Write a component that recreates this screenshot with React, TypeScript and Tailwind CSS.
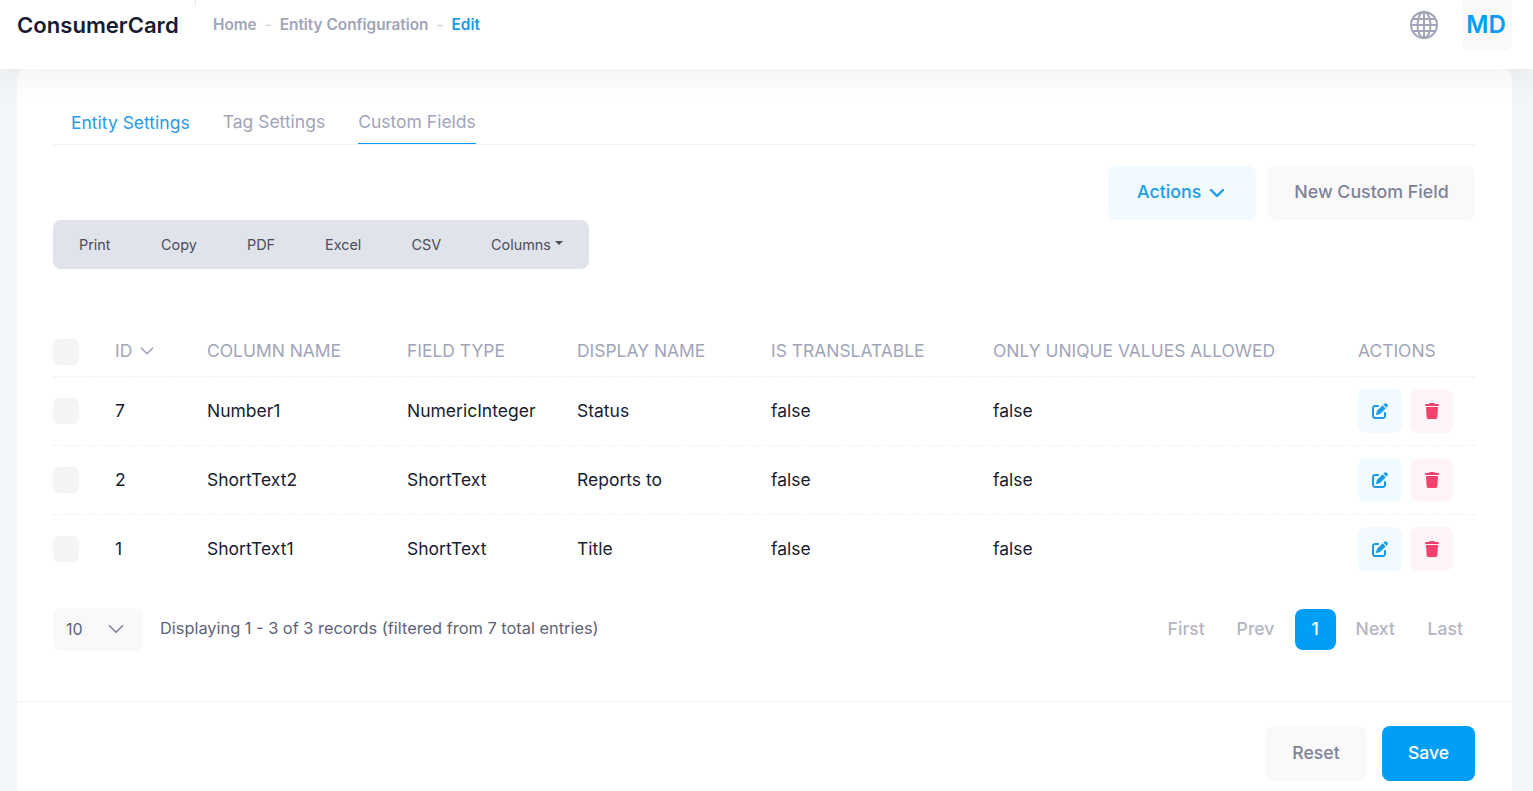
import React from "react";
import { ChevronDown } from "lucide-react";
import { FaPenToSquare, FaTrash } from "react-icons/fa6";

const rows = [
  ["7", "Number1", "NumericInteger", "Status"],
  ["2", "ShortText2", "ShortText", "Reports to"],
  ["1", "ShortText1", "ShortText", "Title"],
];

const grid = "grid grid-cols-[62px_92px_200px_170px_194px_222px_365px_117px] items-center";

function Globe() {
  return (
    <svg width="30" height="30" viewBox="0 0 30 30" fill="none" stroke="#a1a5b7" strokeWidth="2">
      <circle cx="15" cy="15" r="13" />
      <ellipse cx="15" cy="15" rx="6.5" ry="13" />
      <path d="M15 2v26M2 15h26M4 9h22M4 21h22" />
    </svg>
  );
}

export default function App() {
  return (
    <div className="h-[791px] overflow-hidden bg-[#f3f6f9] font-['Inter',sans-serif]">
      <header className="relative z-10 flex h-[69px] items-start justify-between bg-white pl-[17px] pr-[21px] shadow-[0_10px_30px_rgba(0,0,0,0.05)]">
        <div className="flex items-center pt-[11px]">
          <span className="w-[196px] text-[22.1px] leading-[29px] font-semibold text-[#181c32]">ConsumerCard</span>
          <nav className="-mt-[2px] flex items-center text-[15.35px] leading-[29px] font-semibold text-[#a1a5b7]">
            <span>Home</span>
            <span className="mx-[8px] font-normal text-[#cfd1db]">-</span>
            <span>Entity Configuration</span>
            <span className="mx-[8px] font-normal text-[#cfd1db]">-</span>
            <span className="text-[#189bea]">Edit</span>
          </nav>
        </div>
        <div className="flex items-center gap-[23px]">
          <Globe />
          <div className="flex h-[50px] w-[50px] items-center justify-center rounded-b-[8px] bg-[#f9f9f9] pr-[2px] text-[24px] font-semibold text-[#009ef7]">MD</div>
        </div>
        <span className="absolute left-[195px] top-0 h-[6px] w-px bg-[#e4e6ef]" />
      </header>

      <main className="ml-[17px] h-[722px] w-[1495px] rounded-t-[10px] bg-white">
        <div className="h-[632px] pl-[36px] pr-[37px]">
          <div className="flex h-[76px] gap-[33px] border-b border-[#eff2f5] pl-[18px] pt-[39px] text-[17.5px] leading-[28px]">
            <span className="mt-px text-[#2a9be4]">Entity Settings</span>
            <span className="text-[#a1a5b7]">Tag Settings</span>
            <span className="relative h-[36px] text-[#a1a5b7]">
              Custom Fields
              <span className="absolute bottom-0 left-0 h-px w-full bg-[#009ef7]" />
            </span>
          </div>

          <div className="mt-[21px] flex justify-end gap-[12px]">
            <button className="flex h-[54px] w-[148px] items-center gap-[4px] rounded-[8px] bg-[#f1faff] pb-[2px] pl-[29px] text-[17.8px] font-medium text-[#1b9dea]">
              Actions <ChevronDown size={24} strokeWidth={2.4} className="mt-[2px]" />
            </button>
            <button className="h-[54px] w-[207px] rounded-[8px] bg-[#f9f9f9] pb-[2px] text-[17.8px] font-medium text-[#7e8299]">New Custom Field</button>
          </div>

          <div className="flex h-[49px] w-[536px] items-center rounded-[8px] bg-[#e0e3ea] pl-[26px] text-[14.4px] text-[#4b4e5e]">
            <span className="w-[82px]">Print</span>
            <span className="w-[86px]">Copy</span>
            <span className="w-[78px]">PDF</span>
            <span className="w-[86.5px]">Excel</span>
            <span className="w-[79.5px]">CSV</span>
            <span className="flex items-center gap-[4px]">Columns <span className="mt-[-2px] h-0 w-0 border-x-[4px] border-t-[4px] border-x-transparent border-t-[#4b4e5e]" /></span>
          </div>

          <div className={`${grid} mt-[56px] h-[52px] border-b border-dashed border-[#eff2f5] pt-[2px] text-[17.45px] text-[#a1a5b7]`}>
            <span className="h-[26px] w-[26px] rounded-[7px] bg-[#f3f4f6]" />
            <span className="flex items-center gap-[4px]">ID <ChevronDown size={22} strokeWidth={1.8} /></span>
            <span>COLUMN NAME</span>
            <span>FIELD TYPE</span>
            <span>DISPLAY NAME</span>
            <span>IS TRANSLATABLE</span>
            <span>ONLY UNIQUE VALUES ALLOWED</span>
            <span>ACTIONS</span>
          </div>

          {rows.map((r, i) => (
            <div key={r[0]} className={`${grid} h-[69px] border-b border-dashed text-[17.5px] text-[#181c32] ${i < 2 ? "border-[#eff2f5]" : "border-transparent"}`}>
              <span className="h-[26px] w-[26px] rounded-[7px] bg-[#f3f4f6]" />
              <span>{r[0]}</span>
              <span>{r[1]}</span>
              <span>{r[2]}</span>
              <span>{r[3]}</span>
              <span>false</span>
              <span>false</span>
              <span className="flex gap-[8px]">
                <span className="flex h-[44px] w-[44px] items-center justify-center rounded-[8px] bg-[#f1faff] text-[#189bea]"><FaPenToSquare size={16} /></span>
                <span className="flex h-[44px] w-[43px] items-center justify-center rounded-[8px] bg-[#fff5f8] text-[#f1416c]"><FaTrash size={16} /></span>
              </span>
            </div>
          ))}

          <div className="mt-[24px] flex items-center justify-between">
            <div className="flex items-center gap-[17px]">
              <div className="flex h-[43px] w-[90px] items-center justify-between rounded-[8px] bg-[#f9f9f9] pb-[1px] pl-[13px] pr-[14px] text-[16px] text-[#5e6278]">
                10 <ChevronDown size={26} strokeWidth={1.5} className="text-[#7e8299]" />
              </div>
              <span className="-mt-[3px] text-[16.36px] text-[#5e6278]">Displaying 1 - 3 of 3 records (filtered from 7 total entries)</span>
            </div>
            <div className="flex items-center pr-[12px] text-[17.6px] font-medium text-[#b5b5c3]">
              <span className="w-[69px]">First</span>
              <span className="w-[58px]">Prev</span>
              <span className="flex h-[41px] w-[41px] items-center justify-center rounded-[8px] bg-[#009ef7] text-white">1</span>
              <span className="w-[92px] pl-[20px]">Next</span>
              <span>Last</span>
            </div>
          </div>
        </div>

        <div className="flex justify-end gap-[16px] border-t border-[#eff2f5] pr-[37px] pt-[24px]">
          <button className="h-[55px] w-[100px] rounded-[8px] bg-[#f9f9f9] text-[17.6px] font-medium text-[#7e8299]">Reset</button>
          <button className="h-[55px] w-[93px] rounded-[8px] bg-[#009ef7] text-[17.6px] font-medium text-white">Save</button>
        </div>
      </main>
    </div>
  );
}
